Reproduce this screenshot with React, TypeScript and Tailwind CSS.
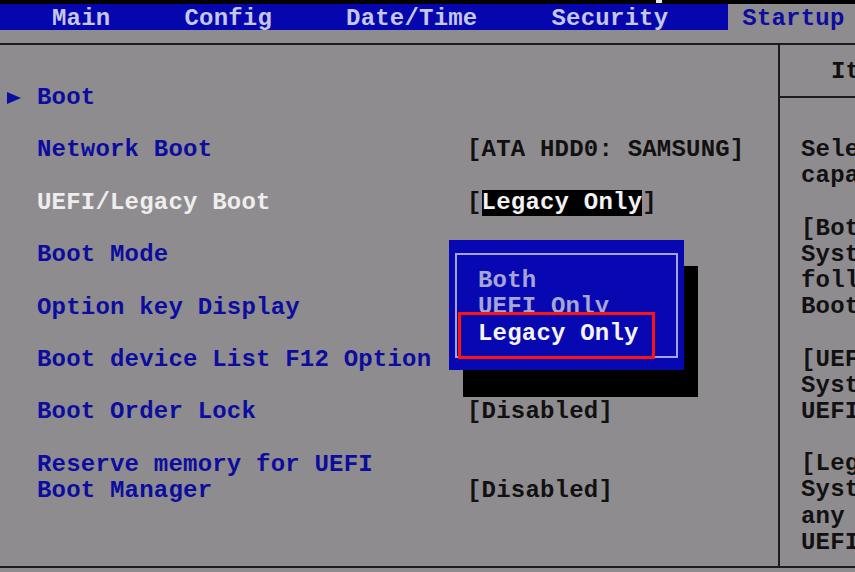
import React from "react";

const font = "font-['Liberation_Mono','DejaVu_Sans_Mono',monospace] font-bold text-[24px] tracking-[0.2px] leading-[26.2px] whitespace-nowrap";

const tabs = ["Main", "Config", "Date/Time", "Security"];

type Row = {
  label: string[];
  value?: React.ReactNode;
  arrow?: boolean;
  active?: boolean;
};

const rows: Row[] = [
  { label: ["Boot"], arrow: true },
  { label: ["Network Boot"], value: "[ATA HDD0: SAMSUNG]" },
  {
    label: ["UEFI/Legacy Boot"],
    active: true,
    value: (
      <>
        [<span className="inline-block h-[26px] bg-black leading-[26px] text-[#f2f2f2]">Legacy Only</span>]
      </>
    ),
  },
  { label: ["Boot Mode"] },
  { label: ["Option key Display"] },
  { label: ["Boot device List F12 Option"] },
  { label: ["Boot Order Lock"], value: "[Disabled]" },
  { label: ["Reserve memory for UEFI", "Boot Manager"], value: "[Disabled]" },
];

const help = [
  "Select system boot",
  "capability.",
  "",
  "[Both]",
  "System will boot",
  "following UEFI/Legacy",
  "Boot Priority.",
  "",
  "[UEFI Only]",
  "System will boot from",
  "UEFI enabled OS.",
  "",
  "[Legacy Only]",
  "System will boot from",
  "any OS other than",
  "UEFI enabled OS.",
];

export default function App() {
  return (
    <div className={`relative flex h-[572px] w-[855px] flex-col overflow-hidden bg-[#8f8c8f] ${font}`}>
      {/* title strip */}
      <div className="flex h-[4px] shrink-0 bg-black pl-[656px]">
        <div className="h-[3px] w-[6px] bg-[#e8e8e8]" />
      </div>

      {/* tabs */}
      <div className="flex h-[26px] shrink-0 gap-[46px] bg-[#0606ae] pl-[38px] text-[#c6c6e6]">
        {tabs.map((t) => (
          <span key={t} className="flex h-full items-center px-[14px] pt-[4px]">
            {t}
          </span>
        ))}
        <span className="flex h-full items-center bg-[#8f8c8f] px-[14px] pt-[4px] text-[#0c0c9e]">Startup</span>
      </div>

      <div className="h-[13px] shrink-0" />
      <div className="h-[2px] shrink-0 bg-[#1c1c1c]" />

      {/* body */}
      <div className="flex min-h-0 flex-1">
        {/* settings list */}
        <div className="flex w-[778px] shrink-0 flex-col gap-[26.2px] pt-[40px]">
          {rows.map((r, i) => (
            <div key={i} className="flex items-end">
              <div className="flex h-[26.2px] w-[37px] items-center pl-[7px]">
                {r.arrow && (
                  <svg width="14" height="12" viewBox="0 0 14 12">
                    <polygon points="0,0 14,6 0,12" fill="#0c0c9e" />
                  </svg>
                )}
              </div>
              <div className={`flex w-[430px] flex-col ${r.active ? "text-[#eeeeee]" : "text-[#0c0c9e]"}`}>
                {r.label.map((l) => (
                  <span key={l}>{l}</span>
                ))}
              </div>
              <div className="text-[#111111]">{r.value}</div>
            </div>
          ))}
        </div>

        <div className="w-[2px] shrink-0 bg-[#1c1c1c]" />

        {/* help panel */}
        <div className="flex min-w-0 flex-1 flex-col overflow-hidden text-[#111111]">
          <div className="flex h-[51px] shrink-0 items-center pl-[51px] pt-[3px]">Item Specific Help</div>
          <div className="h-[2px] shrink-0 bg-[#1c1c1c]" />
          <div className="flex flex-col pl-[21px] pt-[39px]">
            {help.map((h, i) => (
              <span key={i} className="h-[26.2px]">
                {h}
              </span>
            ))}
          </div>
        </div>
      </div>

      <div className="h-[2px] shrink-0 bg-[#1c1c1c]" />
      <div className="h-[4px] shrink-0" />

      {/* popup menu */}
      <div className="absolute left-[463px] top-[266px] h-[131px] w-[235px] bg-black" />
      <div className="absolute left-[449px] top-[240px] h-[130px] w-[235px] bg-[#0808b2] px-[6px] pt-[13px]">
        <div className="flex h-[105px] flex-col overflow-hidden border-2 border-[#a4a4d6] pl-[21px] pt-[13px] text-[#a6a6d4]">
          <span>Both</span>
          <span>UEFI Only</span>
        </div>
      </div>
      <div className="absolute left-[458px] top-[312px] h-[47px] w-[197px] border-[3px] border-[#ff1212] bg-[#0808b2] pl-[17px] pt-[6px] text-[#f4f4f4]">
        Legacy Only
      </div>
    </div>
  );
}
